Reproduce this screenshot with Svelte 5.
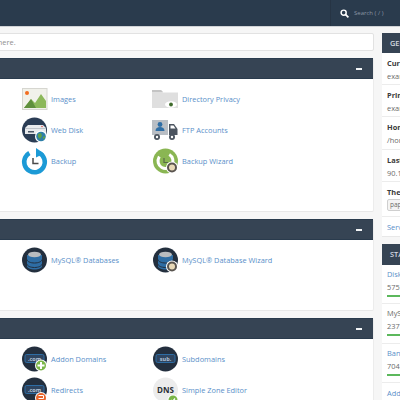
<script>
  const sections = [
    {
      items: [
        { label: 'File Manager', icon: '' },
        { label: 'Images', icon: 'images' },
        { label: 'Directory Privacy', icon: 'folder' },
        { label: 'Disk Usage', icon: '' },
        { label: 'Web Disk', icon: 'webdisk' },
        { label: 'FTP Accounts', icon: 'ftp' },
        { label: 'FTP Connections', icon: '' },
        { label: 'Backup', icon: 'backup' },
        { label: 'Backup Wizard', icon: 'wizard' },
        { label: 'Web Disk Connections', icon: '' }
      ]
    },
    {
      items: [
        { label: 'phpMyAdmin', icon: '' },
        { label: 'MySQL® Databases', icon: 'mysql' },
        { label: 'MySQL® Database Wizard', icon: 'mysqlwiz' },
        { label: 'Remote MySQL®', icon: '' }
      ]
    },
    {
      items: [
        { label: 'Site Publisher', icon: '' },
        { label: 'Addon Domains', icon: 'addon' },
        { label: 'Subdomains', icon: 'sub' },
        { label: 'Aliases', icon: '' },
        { label: 'Redirects', icon: 'redirects' },
        { label: 'Simple Zone Editor', icon: 'dns' }
      ]
    }
  ];

  const general = [
    { title: 'Current User', value: 'example' },
    { title: 'Primary Domain', value: 'example.com' },
    { title: 'Home Directory', value: '/home/example' },
    { title: 'Last Login IP', value: '90.160.12.4' }
  ];

  const stats = [
    { title: 'Disk Usage', value: '575.24 MB / ∞', pct: 100, link: true },
    { title: 'MySQL® Disk Usage', value: '237.1 MB / ∞', pct: 40, link: false },
    { title: 'Bandwidth', value: '704.5 MB / ∞', pct: 8, link: true }
  ];
</script>

{#snippet icon(name)}
  <svg class="icon" viewBox="0 0 26 26" width="26" height="26" aria-hidden="true">
    {#if name === 'images'}
      <rect x="0.5" y="2.5" width="24.500" height="21" fill="#f1f1ea" stroke="#d6d6d0" />
      <circle cx="5" cy="7" r="2" fill="#f26d21" />
      <path d="M2 22l7-9 4 4 6-9 5 7v7z" fill="#8cb85a" />
      <path d="M2 22l7-9 5 9z" fill="#5f8f3c" />
    {:else if name === 'folder'}
      <g transform="translate(-1 0)">
        <path d="M0 4h9l2 2.500h15V22H0z" fill="#dfdfdf" />
        <path d="M0 4h9l2 2H0z" fill="#c4c4c4" />
        <ellipse cx="19" cy="18.500" rx="6" ry="3.200" fill="#fff" />
        <circle cx="19" cy="18.500" r="1.900" fill="#3f6b2c" />
      </g>
    {:else if name === 'webdisk'}
      <circle cx="12.500" cy="13" r="12.500" fill="#2b3d55" />
      <path d="M3 11l3-3h15l3 3v6H3z" fill="#e8eaed" />
      <rect x="3" y="11" width="21" height="1" fill="#bfc4ca" />
      <rect x="6" y="14" width="6" height="1.500" fill="#4a5766" />
      <circle cx="20" cy="9.500" r="0.800" fill="#d9534f" />
      <circle cx="19" cy="19.500" r="6" fill="#fff" />
      <circle cx="19" cy="19.500" r="4.800" fill="#2f7fa8" />
      <path d="M16 17l3-1 1 3-2 3-2-2zM21 20l2-1v2l-2 1z" fill="#5fa04a" />
    {:else if name === 'ftp'}
      <g transform="translate(-1 0)">
        <rect x="0" y="3" width="16" height="15" fill="#b9bec4" />
        <circle cx="8" cy="7.500" r="2.400" fill="#2f6ea5" />
        <path d="M3.500 14c0-3 2-4 4.500-4s4.500 1 4.500 4z" fill="#2f6ea5" />
        <path d="M17 7h5l3.500 5v6H17z" fill="#4c5560" />
        <path d="M18.500 8.500h3l2 3h-5z" fill="#fff" />
        <circle cx="5" cy="20" r="3" fill="#4c5560" /><circle cx="5" cy="20" r="1.200" fill="#fff" />
        <circle cx="20" cy="20" r="3" fill="#4c5560" /><circle cx="20" cy="20" r="1.200" fill="#fff" />
      </g>
    {:else if name === 'backup'}
      <circle cx="12.500" cy="14" r="10.300" fill="none" stroke="#1c9ad6" stroke-width="4.500" stroke-dasharray="54 11" transform="rotate(-62 12.500 14)" />
      <path d="M14 0l8 5.500-8 4z" fill="#1c9ad6" />
      <path d="M11 10v5.500h5.500" fill="none" stroke="#4a4a4a" stroke-width="1.500" />
    {:else if name === 'wizard'}
      <circle cx="12.500" cy="13" r="12.500" fill="#8ab653" />
      <circle cx="12.500" cy="13" r="7.500" fill="none" stroke="#fff" stroke-width="3" stroke-dasharray="36 12" transform="rotate(-60 12.500 13)" />
      <path d="M11 10v4.500h4" fill="none" stroke="#5a6b4a" stroke-width="1.200" />
      <circle cx="19" cy="19.500" r="6" fill="#fff" />
      <circle cx="19" cy="19.500" r="5" fill="#5a5550" />
      <circle cx="19" cy="19.500" r="3" fill="#e8d9b8" />
    {:else if name === 'mysql' || name === 'mysqlwiz'}
      <circle cx="12.500" cy="13" r="12.500" fill="#232f3e" />
      <path d="M5 8v11c0 2 3.500 3.500 7.500 3.500S20 21 20 19V8z" fill="#2e6da4" />
      <path d="M5 12.500c0 2 3.500 3.500 7.500 3.500s7.500-1.500 7.500-3.500M5 17c0 2 3.500 3.500 7.500 3.500S20 19 20 17" fill="none" stroke="#232f3e" stroke-width="1" />
      <ellipse cx="12.500" cy="7.500" rx="6.500" ry="2.800" fill="#b9bcbf" />
      {#if name === 'mysqlwiz'}
        <circle cx="19" cy="19.500" r="6" fill="#fff" />
        <circle cx="19" cy="19.500" r="5" fill="#5a5550" />
        <circle cx="19" cy="19.500" r="3" fill="#e8d9b8" />
      {/if}
    {:else if name === 'addon' || name === 'redirects' || name === 'sub'}
      <circle cx="12.500" cy="13" r="12.500" fill="#232f3e" />
      <rect x="3" y="8.500" width="19" height="8" rx="1.500" fill="#2f4560" stroke="#2e6da4" />
      <text x="12.500" y="15" class="glyph">{name === 'sub' ? 'sub.' : '.com'}</text>
      {#if name === 'addon'}
        <circle cx="19" cy="19.500" r="6" fill="#fff" />
        <circle cx="19" cy="19.500" r="5" fill="#7ab648" />
        <path d="M19 16v7M15.500 19.500h7" stroke="#fff" stroke-width="2" />
      {:else if name === 'redirects'}
        <circle cx="19" cy="21" r="6" fill="#fff" />
        <circle cx="19" cy="21" r="5" fill="#e9662c" />
        <path d="M16.500 18.500h5v3h-5M16.500 23.500h5" fill="none" stroke="#fff" stroke-width="1" />
      {/if}
    {:else if name === 'dns'}
      <circle cx="12.500" cy="13" r="12.500" fill="#ececec" />
      <text x="12.500" y="15.500" class="dns">DNS</text>
      <circle cx="20" cy="23" r="5.500" fill="#fff" />
      <circle cx="20" cy="23" r="4.500" fill="#7ab648" />
      <path d="M18 23l1.500 1.500 2.500-3" fill="none" stroke="#fff" stroke-width="1.200" />
    {/if}
  </svg>
{/snippet}

<header class="topbar">
  <div class="search">
    <svg viewBox="0 0 16 16" width="9" height="9" aria-hidden="true">
      <circle cx="6.500" cy="6.500" r="4.500" fill="none" stroke="#fff" stroke-width="2.600" />
      <path d="M10 10l5 5" stroke="#fff" stroke-width="3" />
    </svg>
    <span>Search ( / )</span>
  </div>
</header>

<div class="page">
  <main class="main">
    <input class="filter" placeholder="Find functions quickly by typing here." />

    {#each sections as section}
      <section class="panel">
        <div class="panel-head"><span class="minus"></span></div>
        <div class="grid">
          {#each section.items as item}
            <a class="item" href="#top">
              <span class="icon-box">
                {#if item.icon}{@render icon(item.icon)}{/if}
              </span>
              <span>{item.label}</span>
            </a>
          {/each}
        </div>
      </section>
    {/each}
  </main>

  <aside class="side">
    <div class="box">
      <h3>GENERAL INFORMATION</h3>
      {#each general as row}
        <div class="row">
          <strong>{row.title}</strong>
          <span>{row.value}</span>
        </div>
      {/each}
      <div class="row theme">
        <strong>Theme</strong>
        <span class="select">paper_lantern</span>
      </div>
      <div class="row link-row"><a href="#top">Server Information</a></div>
    </div>

    <div class="box">
      <h3 class="tall">STATISTICS</h3>
      {#each stats as stat}
        <div class="row stat">
          {#if stat.link}
            <a href="#top">{stat.title}</a>
          {:else}
            <em>{stat.title}</em>
          {/if}
          <span>{stat.value}</span>
          <div class="bar"><div class="fill" style="width: {stat.pct}%"></div></div>
        </div>
      {/each}
      <div class="row link-row"><a href="#top">Addon Domains</a></div>
    </div>
  </aside>
</div>

<style>
  :global(body) {
    margin: 0;
    background: #f6f6f6;
    overflow: hidden;
    font-family: "Open Sans", sans-serif;
  }

  .topbar {
    height: 26px;
    background: #2a3b4d;
    border-bottom: 1px solid #d0d3d6;
    display: flex;
    justify-content: flex-end;
  }

  .search {
    width: 60px;
    margin-left: auto;
    border-left: 1px solid #263444;
    padding-left: 9px;
    flex-shrink: 0;
    display: flex;
    align-items: center;
    gap: 5px;
    font-size: 6px;
    color: #8a96a3;
    white-space: nowrap;
  }

  .page {
    display: flex;
    gap: 8px;
    width: 800px;
    margin-left: -125px;
    padding-top: 6px;
  }

  .main {
    width: 499px;
    flex-shrink: 0;
  }

  .filter {
    display: block;
    width: 100%;
    height: 18px;
    box-sizing: border-box;
    border: 1px solid #e2e2e2;
    border-radius: 2px;
    background: #fff;
    padding: 0 6px 0 12px;
    margin-bottom: 7px;
    font: 7.400px "Open Sans", sans-serif;
  }

  .filter::placeholder {
    color: #8f8f8f;
    opacity: 1;
  }

  .panel {
    background: #fff;
    border-bottom: 1px solid #e8e8e8;
    border-right: 1px solid #ececec;
    border-radius: 2px;
    margin-bottom: 7px;
  }

  .panel-head {
    height: 21px;
    box-sizing: border-box;
    background: #364454;
    border-top: 1px solid #2a3b4d;
    border-bottom: 1px solid #2a3b4d;
    display: flex;
    align-items: center;
    justify-content: flex-end;
    padding-right: 11px;
  }

  .minus {
    width: 6px;
    height: 2px;
    background: #f2f4f6;
  }

  .grid {
    display: grid;
    grid-template-columns: repeat(3, 131px);
    grid-auto-rows: 31px;
    padding: 4.500px 0 3.500px 16px;
  }

  .item {
    display: flex;
    align-items: center;
    gap: 3px;
    font-size: 7.400px;
    color: #5a8fc9;
    text-decoration: none;
    white-space: nowrap;
  }

  .icon-box {
    width: 26px;
    height: 26px;
    flex-shrink: 0;
  }

  .icon {
    display: block;
    overflow: visible;
  }

  .glyph {
    font: 700 5.500px "Open Sans", sans-serif;
    fill: #b6c4d6;
    text-anchor: middle;
  }

  .dns {
    font: 700 8px "Open Sans", sans-serif;
    fill: #2a2f36;
    text-anchor: middle;
  }

  .side {
    width: 200px;
    flex-shrink: 0;
  }

  .box {
    background: #fff;
    border-bottom: 1px solid #e8e8e8;
    margin-bottom: 7px;
  }

  h3 {
    margin: 0;
    height: 20px;
    box-sizing: border-box;
    padding-left: 8px;
    background: #364454;
    font-size: 7.400px;
    font-weight: 600;
    line-height: 20px;
    color: #d5dae0;
    white-space: nowrap;
  }

  h3.tall {
    height: 21px;
    line-height: 21px;
  }

  .row {
    display: flex;
    flex-direction: column;
    gap: 3px;
    height: 32.200px;
    box-sizing: border-box;
    padding: 5px 5px 0;
    border-bottom: 1px solid #ececec;
    font-size: 7.400px;
    line-height: 10px;
    color: #6b6b6b;
    white-space: nowrap;
  }

  .row strong {
    color: #3a3a3a;
    font-weight: 700;
  }

  .row a {
    color: #5a8fc9;
    text-decoration: none;
  }

  .row em {
    font-style: normal;
    color: #6b6b6b;
  }

  .theme {
    height: 35px;
    gap: 2px;
  }

  .select {
    width: 60px;
    height: 12px;
    box-sizing: border-box;
    border: 1px solid #cfcfcf;
    border-radius: 2px;
    background: #f4f4f4;
    padding-left: 2px;
    font-size: 6.500px;
    line-height: 10px;
  }

  .link-row {
    height: 19px;
    border-bottom: none;
  }

  .stat {
    height: 39.500px;
    padding-top: 4px;
  }

  .bar {
    height: 2px;
    background: #d5d5d5;
  }

  .fill {
    height: 100%;
    background: #5cb85c;
  }
</style>
